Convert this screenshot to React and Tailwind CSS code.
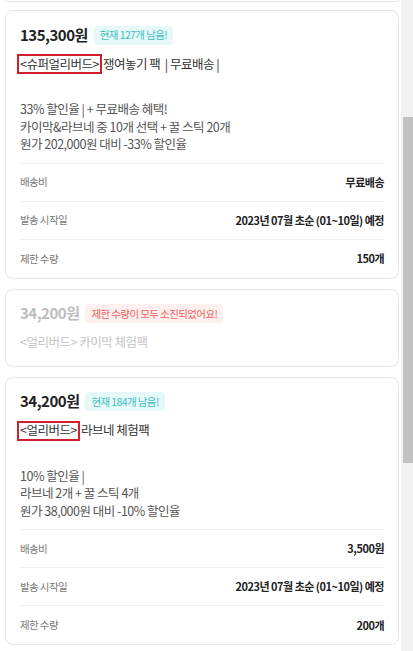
import React from 'react';

const font = { fontFamily: '"Noto Sans CJK KR", "Noto Sans", sans-serif' };

const Badge = ({ tone, children }) => (
  <span
    className={`inline-flex items-center h-[19px] px-[6px] rounded-[4px] text-[10.5px] tracking-[-0.6px] ${
      tone === 'red' ? 'bg-[#fff0f0] text-[#f06262]' : 'bg-[#e6f8f8] text-[#3dbec4]'
    }`}
  >
    {children}
  </span>
);

const InfoRow = ({ label, value, last }) => (
  <div className={`flex items-center justify-between h-[38px] ${last ? '' : 'border-b border-[#efefef]'}`}>
    <span className="text-[10.5px] tracking-[-0.6px] text-[#777]">{label}</span>
    <span className="text-[11px] tracking-[-0.5px] font-bold text-[#222]">{value}</span>
  </div>
);

const Option = ({ price, badge, tag, title, lines, rows }) => (
  <div className="border border-[#e6e6e6] rounded-[8px] px-[14px] pt-[13px]">
    <div className="flex items-center gap-[6px] h-[22px]">
      <span className="text-[15px] font-bold tracking-[-0.5px] text-[#222]">{price}</span>
      <Badge>{badge}</Badge>
    </div>
    <div className="mt-[8px] h-[20px] flex items-center text-[12.5px] tracking-[-0.5px] text-[#333] -ml-[3px] whitespace-pre">
      <span className="border-2 border-[#d21f2b] h-[20px] flex items-center px-[1px]">{tag}</span>
      <span className="ml-[1px]">{title}</span>
    </div>
    <div className="mt-[26px] text-[12.5px] tracking-[-0.5px] leading-[17.5px] text-[#555] whitespace-pre">
      {lines.map((l) => (
        <p key={l}>{l}</p>
      ))}
    </div>
    <div className="mt-[10px] border-t border-[#efefef]">
      {rows.map((r, i) => (
        <InfoRow key={r[0]} label={r[0]} value={r[1]} last={i === rows.length - 1} />
      ))}
    </div>
  </div>
);

export default function App() {
  return (
    <div className="flex h-[651px] overflow-hidden bg-white" style={font}>
      <div className="flex-1 pl-[5px] pr-[2px] flex flex-col gap-[10px]">
        <div className="-mb-[2px] h-[2px] border-x border-b border-[#e6e6e6] rounded-b-[8px]" />

        <Option
          price="135,300원"
          badge="현재 127개 남음!"
          tag="<슈퍼얼리버드>"
          title="쟁여놓기 팩  | 무료배송 |"
          lines={['33% 할인율 | + 무료배송 혜택!', '카이막&라브네 중 10개 선택 + 꿀 스틱 20개', '원가 202,000원 대비 -33% 할인율']}
          rows={[
            ['배송비', '무료배송'],
            ['발송 시작일', '2023년 07월 초순 (01~10일) 예정'],
            ['제한 수량', '150개'],
          ]}
        />

        <div className="border border-[#e6e6e6] rounded-[8px] px-[14px] pt-[13px] pb-[13px]">
          <div className="flex items-center gap-[6px] h-[22px]">
            <span className="text-[15px] font-bold tracking-[-0.5px] text-[#bdbdbd]">34,200원</span>
            <Badge tone="red">제한 수량이 모두 소진되었어요!</Badge>
          </div>
          <div className="mt-[8px] h-[20px] flex items-center text-[12.5px] tracking-[-0.5px] text-[#c4c4c4]">
            &lt;얼리버드&gt; 카이막 체험팩
          </div>
        </div>

        <Option
          price="34,200원"
          badge="현재 184개 남음!"
          tag="<얼리버드>"
          title="라브네 체험팩"
          lines={['10% 할인율 |', '라브네 2개 + 꿀 스틱 4개', '원가 38,000원 대비 -10% 할인율']}
          rows={[
            ['배송비', '3,500원'],
            ['발송 시작일', '2023년 07월 초순 (01~10일) 예정'],
            ['제한 수량', '200개'],
          ]}
        />
      </div>
      <div className="w-[12px] bg-[#f1f1f1]">
        <div className="mt-[117px] ml-[2px] h-[346px] bg-[#c1c1c1]" />
      </div>
    </div>
  );
}
